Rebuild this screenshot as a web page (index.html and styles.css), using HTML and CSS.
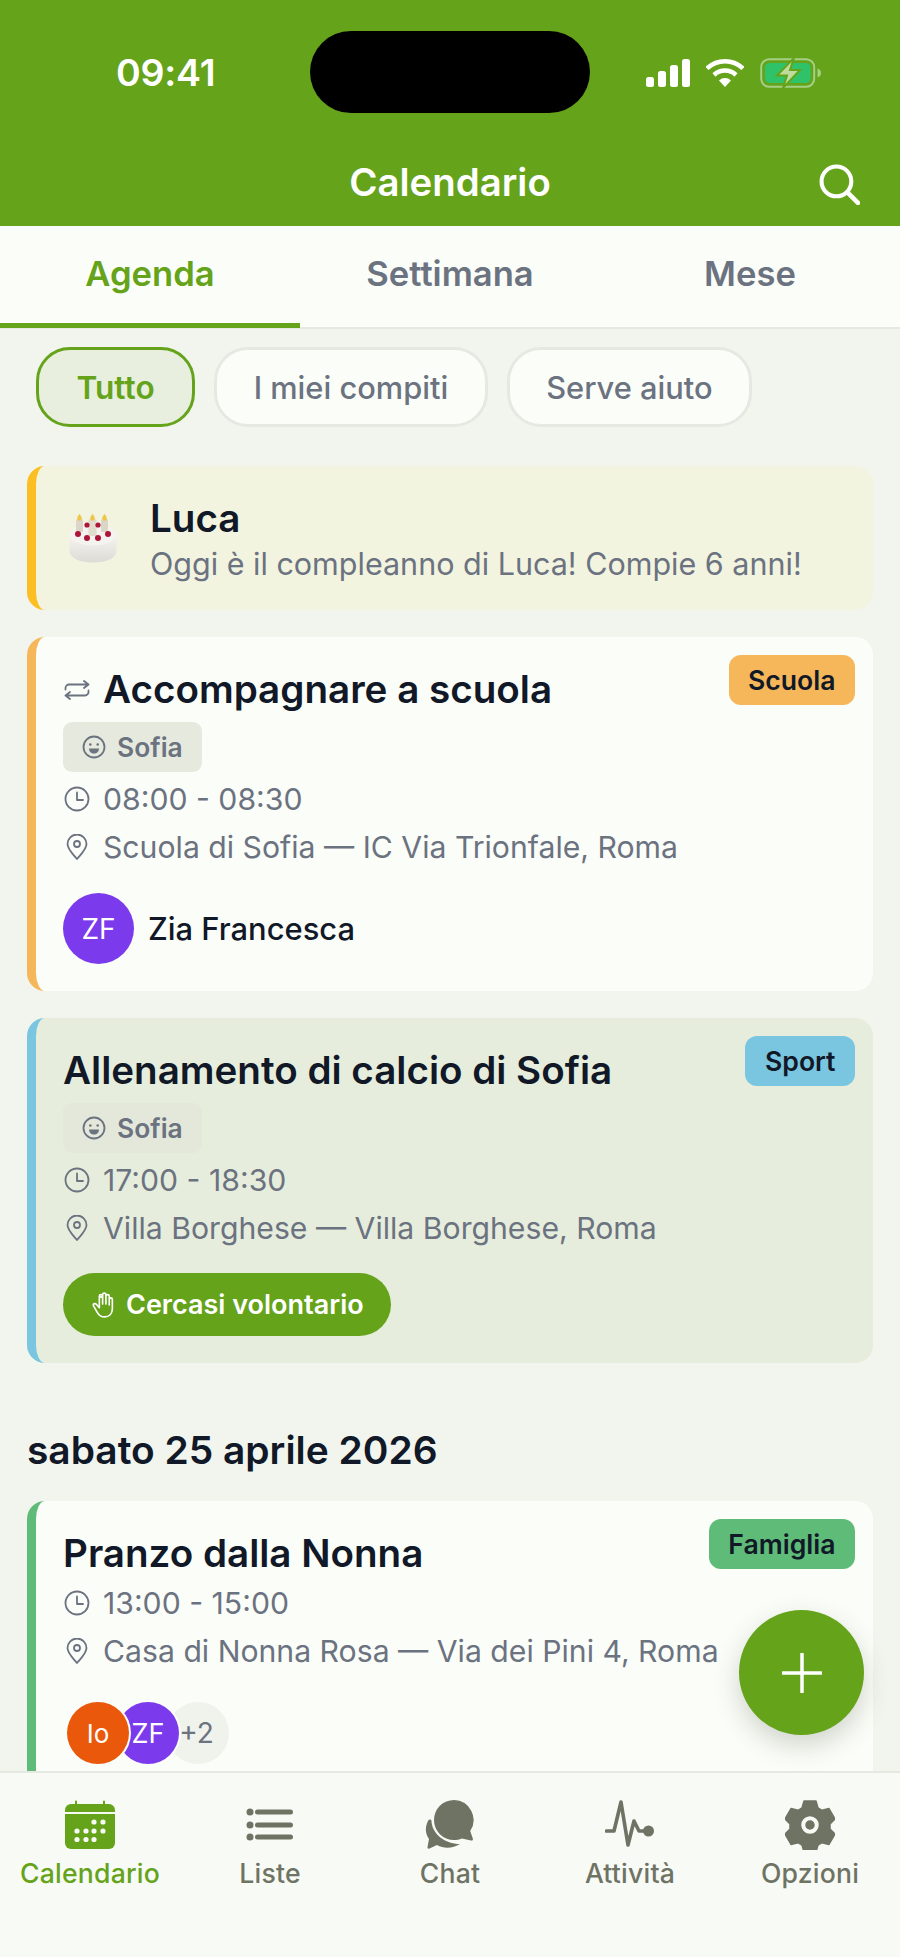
FILE: index.html
```html
<!DOCTYPE html>
<html lang="it">
<head>
<meta charset="utf-8">
<title>Calendario</title>
<link rel="stylesheet" href="styles.css">
</head>
<body>
<div class="app">
  <header class="top">
    <div class="status">
      <span class="clock">09:41</span>
      <span class="island"></span>
      <span class="sys">
        <svg class="i-signal" viewBox="0 0 44 28"><rect x="0" y="18" width="8" height="10" rx="2.5"/><rect x="12" y="12" width="8" height="16" rx="2.5"/><rect x="24" y="6" width="8" height="22" rx="2.5"/><rect x="36" y="0" width="8" height="28" rx="2.5"/></svg>
        <svg class="i-wifi" viewBox="0 0 38 28"><path d="M1 9.5a26 26 0 0 1 36 0" fill="none" stroke="#fff" stroke-width="4.5"/><path d="M8 16a16 16 0 0 1 22 0" fill="none" stroke="#fff" stroke-width="4.5"/><path d="M13 21.5a8.5 8.5 0 0 1 12 0L19 28z" fill="#fff"/></svg>
        <svg class="i-batt" viewBox="0 0 62 30"><rect x="1.2" y="1.2" width="53" height="27.6" rx="8" fill="none" stroke="#a5cf85" stroke-width="2"/><rect x="5" y="5" width="45.5" height="20" rx="4.5" fill="#2fc268"/><path d="M57.500 10.500c2.500.8 3.500 2.500 3.500 4.500s-1 3.700-3.500 4.500z" fill="#a5cf85"/><path d="M34 0 17 17.500h10L23 30l17-18H30l4-12z" fill="#bfdc9f" stroke="#65a31b" stroke-width="2"/></svg>
      </span>
    </div>
    <div class="titlebar">
      <h1>Calendario</h1>
      <svg class="i-search" viewBox="0 0 40 40"><circle cx="17" cy="17" r="14.500" fill="none" stroke="#fff" stroke-width="4"/><path d="M28 28l10 10" stroke="#fff" stroke-width="4.500" stroke-linecap="round"/></svg>
    </div>
  </header>

  <nav class="tabs">
    <a class="tab active">Agenda</a>
    <a class="tab">Settimana</a>
    <a class="tab">Mese</a>
  </nav>

  <main class="main">
    <div class="filters">
      <span class="pill on">Tutto</span>
      <span class="pill">I miei compiti</span>
      <span class="pill">Serve aiuto</span>
    </div>

    <section class="bday">
      <svg class="cake" viewBox="0 0 48 50">
        <defs><linearGradient id="cakeside" x1="0" y1="0" x2="0" y2="1"><stop offset="0" stop-color="#f6f4f0"/><stop offset="1" stop-color="#dddbd6"/></linearGradient></defs>
        <path d="M.5 21v16c0 7 10 11.500 23.500 11.500S47.500 44 47.500 37V21z" fill="url(#cakeside)"/>
        <ellipse cx="24" cy="21" rx="23.500" ry="10.500" fill="#f5f3ef"/>
        <rect x="7" y="5" width="7" height="13" rx="1.500" fill="#dcd6c8"/>
        <rect x="19.500" y="5" width="8" height="17" rx="1.500" fill="#e2dccf"/>
        <rect x="32" y="5" width="7" height="13" rx="1.500" fill="#dcd6c8"/>
        <path d="M10.500 0c1.800 2.200 2.300 3.400 2.300 4.500a2.300 2.300 0 0 1-4.600 0C8.200 3.400 8.700 2.200 10.500 0zM23.500 0c1.800 2.200 2.300 3.400 2.300 4.500a2.300 2.300 0 0 1-4.600 0C21.200 3.400 21.700 2.200 23.500 0zM35.500 0c1.800 2.200 2.300 3.400 2.300 4.500a2.300 2.300 0 0 1-4.600 0C33.200 3.400 33.700 2.200 35.500 0z" fill="#eec544"/>
        <g fill="#ad1638"><circle cx="18" cy="11" r="2.600"/><circle cx="29" cy="11" r="2.600"/><circle cx="9" cy="20" r="3"/><circle cx="18" cy="24" r="3"/><circle cx="29" cy="24" r="3"/><circle cx="39" cy="20" r="3"/></g>
      </svg>
      <div class="bday-text">
        <h3>Luca</h3>
        <p>Oggi è il compleanno di Luca! Compie 6 anni!</p>
      </div>
    </section>

    <article class="card c-school">
      <span class="badge b-school">Scuola</span>
      <h2><svg class="i-repeat" viewBox="0 0 26 20"><path d="M1.500 9.500V8a3.500 3.500 0 0 1 3.500-3.500h19M20 1l4.500 3.500L20 8M24.500 10.500V12a3.500 3.500 0 0 1-3.500 3.500H2M6 12l-4.500 3.500L6 19" fill="none" stroke="#6b7280" stroke-width="1.800" stroke-linecap="round" stroke-linejoin="round"/></svg>Accompagnare a scuola</h2>
      <span class="child"><svg class="i-smile" viewBox="0 0 24 24"><use href="#smile"/></svg>Sofia</span>
      <p class="row"><svg class="i-row" viewBox="0 0 26 26"><use href="#clock"/></svg>08:00 - 08:30</p>
      <p class="row"><svg class="i-row" viewBox="0 0 26 26"><use href="#pin"/></svg>Scuola di Sofia — IC Via Trionfale, Roma</p>
      <div class="assignee">
        <span class="ava ava-lg purple">ZF</span>
        <span class="who">Zia Francesca</span>
      </div>
    </article>

    <article class="card c-sport">
      <span class="badge b-sport">Sport</span>
      <h2>Allenamento di calcio di Sofia</h2>
      <span class="child dim"><svg class="i-smile" viewBox="0 0 24 24"><use href="#smile"/></svg>Sofia</span>
      <p class="row"><svg class="i-row" viewBox="0 0 26 26"><use href="#clock"/></svg>17:00 - 18:30</p>
      <p class="row"><svg class="i-row" viewBox="0 0 26 26"><use href="#pin"/></svg>Villa Borghese — Villa Borghese, Roma</p>
      <button class="help"><svg class="i-hand" viewBox="0 0 24 28"><path d="M8 14V4.500a1.800 1.800 0 0 1 3.600 0V13M11.600 13V2.800a1.800 1.800 0 0 1 3.600 0V13M15.200 13V4.500a1.800 1.800 0 0 1 3.600 0V14M18.800 14V8a1.700 1.700 0 0 1 3.400 0v10c0 5.500-3.500 9-8.500 9-4 0-6-1.500-8-5l-4-7c-1-2 1.500-3.500 3-1.800L8 17V7a1.800 1.800 0 0 1 3.600 0" fill="none" stroke="#fff" stroke-width="1.800" stroke-linecap="round" stroke-linejoin="round"/></svg>Cercasi volontario</button>
    </article>

    <h2 class="day">sabato 25 aprile 2026</h2>

    <article class="card c-family">
      <span class="badge b-family">Famiglia</span>
      <h2>Pranzo dalla Nonna</h2>
      <p class="row"><svg class="i-row" viewBox="0 0 26 26"><use href="#clock"/></svg>13:00 - 15:00</p>
      <p class="row"><svg class="i-row" viewBox="0 0 26 26"><use href="#pin"/></svg>Casa di Nonna Rosa — Via dei Pini 4, Roma</p>
      <div class="stack">
        <span class="ava orange">Io</span>
        <span class="ava purple zf">ZF</span>
        <span class="ava more">+2</span>
      </div>
    </article>

    <button class="fab"><svg viewBox="0 0 40 40"><path d="M20 1v38M1 20h38" stroke="#fff" stroke-width="3.500" stroke-linecap="round"/></svg></button>
  </main>

  <footer class="nav">
    <a class="nav-item active">
      <svg class="nav-ico" viewBox="0 0 50 50">
        <path d="M0 12V10a6 6 0 0 1 6-6h4V1.500a1 1 0 0 1 2 0V4h26V1.500a1 1 0 0 1 2 0V4h4a6 6 0 0 1 6 6v2z" fill="#65a31b"/>
        <path d="M0 14h50v29a6 6 0 0 1-6 6H6a6 6 0 0 1-6-6z" fill="#65a31b"/>
        <g fill="#f8faf5"><circle cx="29" cy="22" r="2.600"/><circle cx="38" cy="22" r="2.600"/><circle cx="12" cy="31" r="2.600"/><circle cx="21" cy="31" r="2.600"/><circle cx="29" cy="31" r="2.600"/><circle cx="38" cy="31" r="2.600"/><circle cx="12" cy="39.500" r="2.600"/><circle cx="21" cy="39.500" r="2.600"/><circle cx="29" cy="39.500" r="2.600"/></g>
      </svg>
      <span>Calendario</span>
    </a>
    <a class="nav-item">
      <svg class="nav-ico" viewBox="0 0 50 50">
        <g fill="#6e7364"><circle cx="5" cy="12" r="3.500"/><circle cx="5" cy="25" r="3.500"/><circle cx="5" cy="37" r="3.500"/></g>
        <path d="M12.500 12h33M12.500 25h33M12.500 37h33" stroke="#6e7364" stroke-width="5" stroke-linecap="round"/>
      </svg>
      <span>Liste</span>
    </a>
    <a class="nav-item">
      <svg class="nav-ico" viewBox="0 0 50 50">
        <path d="M3 21c-3 6-3 12 1 18l-1.500 8c-.2 1.500 .8 2 2 1.500l7.500-3.500c7 4 16 3.500 23-1C20 44 7 34 6.500 21c-.2-2-2.700-2-3.500 0z" fill="#6e7364"/>
        <path d="M29 0a20 20 0 1 0 0 40c2.800 0 5.400-.500 7.800-1.600l9.200 2.100c1.500.3 2.300-.700 1.800-2l-2.600-7.500A20 20 0 0 0 29 0z" fill="#6e7364"/>
      </svg>
      <span>Chat</span>
    </a>
    <a class="nav-item">
      <svg class="nav-ico" viewBox="0 0 50 50">
        <path d="M1.500 31h7.500L16 2l7 43 6-24 5 10h8" fill="none" stroke="#6e7364" stroke-width="3.600" stroke-linecap="round" stroke-linejoin="round"/>
        <circle cx="43.500" cy="31" r="5.500" fill="#6e7364"/>
      </svg>
      <span>Attività</span>
    </a>
    <a class="nav-item">
      <svg class="nav-ico" viewBox="0 0 50 50">
        <path fill-rule="evenodd" d="M19 1h12l2 7 4 2.300 7-1.800 6 10.500-5 5v5l5 5-6 10.500-7-1.800-4 2.300-2 7H19l-2-7-4-2.300-7 1.800-6-10.500 5-5v-5l-5-5L6 8.500l7 1.800L17 8zM25 15.500a9.500 9.500 0 1 0 0 19 9.500 9.500 0 0 0 0-19zM25 21a4 4 0 1 1 0 8 4 4 0 0 1 0-8z" fill="#6e7364" stroke="#6e7364" stroke-width="1.500" stroke-linejoin="round"/>
      </svg>
      <span>Opzioni</span>
    </a>
  </footer>
</div>

<svg class="defs" aria-hidden="true">
  <symbol id="clock" viewBox="0 0 26 26"><circle cx="13" cy="13" r="11.500" fill="none" stroke="#6b7280" stroke-width="1.800"/><path d="M13 6.500V14h6" fill="none" stroke="#6b7280" stroke-width="1.800" stroke-linecap="round" stroke-linejoin="round"/></symbol>
  <symbol id="pin" viewBox="0 0 26 26"><path d="M13 25C8 19 3.500 15 3.500 10a9.500 9.500 0 0 1 19 0c0 5-4.500 9-9.500 15z" fill="none" stroke="#6b7280" stroke-width="1.800" stroke-linejoin="round"/><circle cx="13" cy="10" r="3" fill="none" stroke="#6b7280" stroke-width="1.800"/></symbol>
  <symbol id="smile" viewBox="0 0 24 24"><circle cx="12" cy="12" r="10.500" fill="none" stroke="#6b7280" stroke-width="1.800"/><circle cx="8.300" cy="9.500" r="1.300" fill="#6b7280"/><circle cx="15.700" cy="9.500" r="1.300" fill="#6b7280"/><path d="M7 13.500h10c0 3-2.200 5-5 5s-5-2-5-5z" fill="#6b7280"/></symbol>
</svg>
</body>
</html>
```
FILE: styles.css
```css
* { box-sizing: border-box; }
html, body { margin: 0; padding: 0; }
body { font-family: Inter, "Noto Sans", sans-serif; color: #111827; background: #f2f5ee; }
h1, h2, h3, p { margin: 0; }
.defs { display: none; }

.app { display: flex; flex-direction: column; height: 1957px; overflow: hidden; }

.top { background: #65a31b; height: 226px; color: #fff; flex: none; }
.status { display: flex; align-items: center; height: 146px; position: relative; }
.clock { font-size: 37.5px; font-weight: 600; width: 100%; padding-left: 116px; line-height: 1; letter-spacing: -.2px; }
.island { position: absolute; left: 310px; top: 31px; width: 280px; height: 82px; border-radius: 41px; background: #000; }
.sys { position: absolute; left: 646px; top: 58px; display: flex; align-items: center; }
.i-signal { width: 44px; height: 28px; fill: #fff; }
.i-wifi { width: 38px; height: 28px; margin-left: 16px; }
.i-batt { width: 62px; height: 30px; margin-left: 16px; }
.titlebar { display: flex; justify-content: center; align-items: center; height: 76px; margin-top: -2px; position: relative; }
.titlebar h1 { font-size: 38.4px; font-weight: 600; line-height: 76px; }
.i-search { position: absolute; left: 819px; top: 20px; width: 41px; height: 41px; }

.tabs { display: flex; height: 103px; background: #fbfdf8; border-bottom: 2px solid #e6e9e1; flex: none; }
.tab { flex: 1; display: flex; align-items: center; justify-content: center; padding-bottom: 8px; font-size: 34.6px; font-weight: 600; color: #6b7280; }
.tab.active { color: #65a31b; box-shadow: inset 0 -5px 0 #65a31b; margin-bottom: -1px; }

.main { flex: 1; min-height: 0; overflow: hidden; position: relative; padding: 18px 27px 0; }
.filters { display: flex; gap: 19px; padding-left: 9px; margin-bottom: 39px; }
.pill { height: 80px; display: flex; align-items: center; padding: 0 36.500px; border-radius: 34px; border: 3px solid #e6e9e1; background: #fbfdf8; color: #6b7280; font-size: 30.8px; font-weight: 500; }
.pill.on { border-color: #65a31b; background: #e8efde; color: #65a31b; font-size: 31.6px; font-weight: 600; padding: 0 37.500px; }

.bday { display: flex; align-items: center; height: 144px; border-left: 9px solid #fbbf24; border-radius: 18px; background: #f3f4e0; padding-left: 33px; margin-bottom: 27px; }
.cake { width: 48px; height: 50px; flex: none; margin-top: 2px; }
.bday-text { margin-left: 33px; margin-top: 2px; }
.bday-text h3 { font-size: 38.6px; font-weight: 600; line-height: 50px; }
.bday-text p { font-size: 30.5px; color: #6b7280; line-height: 42px; white-space: nowrap; }

.card { position: relative; border-left: 9px solid #ccc; border-radius: 18px; background: #fbfdf8; padding: 28px 27px 27px 27px; margin-bottom: 27px; }
.card h2 { font-size: 38.6px; font-weight: 600; line-height: 48px; display: flex; align-items: center; }
.c-school { border-left-color: #f5b759; }
.c-sport { border-left-color: #7ac5df; background: #e6eddc; }
.c-family { border-left-color: #5fbb78; padding-bottom: 60px; margin-bottom: 0; }

.badge { position: absolute; top: 18px; right: 18px; height: 50px; display: flex; align-items: center; padding: 0 19.500px; border-radius: 12px; font-size: 26.6px; font-weight: 600; }
.b-school { background: #f5b759; }
.b-sport { background: #7ac5df; }
.b-family { background: #5fbb78; }

.i-repeat { width: 26px; height: 20px; margin: 2px 13px 0 1px; flex: none; }
.child { display: flex; align-items: center; width: 139px; height: 50px; margin: 9px 0 8px; padding-left: 19px; border-radius: 9px; background: #e6eade; color: #6b7280; font-size: 26.4px; font-weight: 600; }
.child.dim { background: #e3e8da; }
.i-smile { width: 24px; height: 24px; margin-right: 11px; flex: none; }
.row { display: flex; align-items: center; height: 38px; margin-top: 7px; font-size: 30.2px; color: #6b7280; white-space: nowrap; }
.row + .row { margin-top: 10px; }
.i-row { width: 26px; height: 26px; margin: 0 13px 0 1px; flex: none; }

.assignee { display: flex; align-items: center; margin-top: 27px; }
.who { font-size: 30.9px; font-weight: 500; margin-left: 14px; }
.ava { display: flex; align-items: center; justify-content: center; width: 62px; height: 62px; border-radius: 50%; color: #fff; font-size: 26px; }
.ava-lg { width: 71px; height: 71px; font-size: 28px; }
.purple { background: #7c3aed; }
.orange { background: #ea580c; }
.more { background: #f0f2ec; color: #6b7280; font-size: 28px; padding-right: 3px; }
.zf { font-size: 27px; }

.stack { display: flex; margin: 32px 0 0 4px; }
.stack .ava + .ava { margin-left: -12px; }
.stack .orange { z-index: 2; box-shadow: 0 0 0 2px #fbfdf8; }
.stack .purple { z-index: 1; box-shadow: 0 0 0 2px #fbfdf8; }

.help { display: flex; align-items: center; height: 63px; width: 328px; margin-top: 26px; padding: 0 0 0 29px; border: 0; border-radius: 32px; background: #65a31b; color: #fff; font: 600 27px Inter, sans-serif; white-space: nowrap; }
.i-hand { width: 22px; height: 26px; margin-right: 12px; flex: none; }

.day { font-size: 38.9px; font-weight: 600; line-height: 54px; margin: 60px 0 24px; height: 54px; }

.fab { position: absolute; left: 739px; top: 1281px; width: 125px; height: 125px; padding: 0; border: 0; border-radius: 50%; background: #65a31b; display: flex; align-items: center; justify-content: center; box-shadow: 0 10px 26px rgba(60, 70, 50, .22); }
.fab svg { width: 40px; height: 40px; }

.nav { display: flex; flex: none; height: 186px; background: #f8faf5; border-top: 2px solid #e6e9e1; position: relative; z-index: 2; }
.nav-item { flex: 1; display: flex; flex-direction: column; align-items: center; padding-top: 27px; color: #6e7364; font-size: 26.6px; font-weight: 500; letter-spacing: .2px; }
.nav-item.active { color: #65a31b; }
.nav-ico { width: 50px; height: 50px; flex: none; }
.nav-item span { margin-top: 7px; line-height: 32px; }
```
